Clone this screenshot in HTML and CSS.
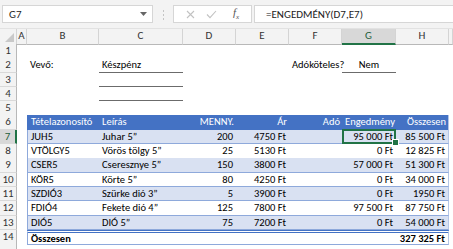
FILE: index.html
```html
<!DOCTYPE html>
<html lang="hu">
<head>
    <meta charset="UTF-8">
    <meta name="viewport" content="width=device-width, initial-scale=1.0">
    <title>Engedmény munkalap</title>
    <link rel="stylesheet" href="styles.css">
</head>
<body>
    <div class="formula-bar">
        <div class="name-box">
            <span>G7</span>
            <svg class="caret" width="7" height="4" viewBox="0 0 7 4"><path d="M0 0h7L3.5 4z" fill="#666"/></svg>
        </div>
        <div class="grip">
            <svg width="3" height="11" viewBox="0 0 3 11"><g fill="#c4c4c4"><rect x="1" y="1" width="1" height="2"/><rect x="1" y="5" width="1" height="2"/><rect x="1" y="9" width="1" height="2"/></g></svg>
        </div>
        <div class="fx-buttons">
            <svg class="cancel" width="9" height="9" viewBox="0 0 9 9"><path d="M1 1l7 7M8 1L1 8" stroke="#c2c2c2" stroke-width="1.1" fill="none"/></svg>
            <svg class="enter" width="11" height="9" viewBox="0 0 11 9"><path d="M1 4.5l3 3.2L10 1" stroke="#c2c2c2" stroke-width="1.1" fill="none"/></svg>
            <span class="fx">f<sub>x</sub></span>
        </div>
        <div class="formula">=ENGEDMÉNY(D7,E7)</div>
    </div>

    <div class="sheet">
        <div class="row heads">
            <div class="corner"><svg width="9" height="9" viewBox="0 0 9 9"><path d="M9 0v9H0z" fill="#c9c9c9"/></svg></div>
            <div class="ch">A</div><div class="ch">B</div><div class="ch">C</div><div class="ch">D</div>
            <div class="ch">E</div><div class="ch">F</div><div class="ch sel">G</div><div class="ch">H</div><div class="ch"></div>
        </div>

        <div class="row"><div class="rh">1</div><div class="c"></div><div class="c"></div><div class="c"></div><div class="c"></div><div class="c"></div><div class="c"></div><div class="c"></div><div class="c"></div><div class="c"></div></div>
        <div class="row"><div class="rh">2</div><div class="c"></div><div class="c">Vevő:</div><div class="c line">Készpénz</div><div class="c"></div><div class="c"></div><div class="c r">Adóköteles?</div><div class="c line mid">Nem</div><div class="c"></div><div class="c"></div></div>
        <div class="row"><div class="rh">3</div><div class="c"></div><div class="c"></div><div class="c line"></div><div class="c"></div><div class="c"></div><div class="c"></div><div class="c"></div><div class="c"></div><div class="c"></div></div>
        <div class="row"><div class="rh">4</div><div class="c"></div><div class="c"></div><div class="c line"></div><div class="c"></div><div class="c"></div><div class="c"></div><div class="c"></div><div class="c"></div><div class="c"></div></div>
        <div class="row"><div class="rh">5</div><div class="c"></div><div class="c"></div><div class="c"></div><div class="c"></div><div class="c"></div><div class="c"></div><div class="c"></div><div class="c"></div><div class="c"></div></div>

        <div class="row head-row"><div class="rh">6</div><div class="c"></div>
            <div class="c t first">Tételazonosító</div><div class="c t">Leírás</div><div class="c t r">MENNY.</div><div class="c t r">Ár</div>
            <div class="c t r">Adó</div><div class="c t r">Engedmény</div><div class="c t r last">Összesen</div><div class="c"></div>
        </div>
        <div class="row band"><div class="rh sel">7</div><div class="c"></div>
            <div class="c t first">JUH5</div><div class="c t">Juhar 5”</div><div class="c t r">200</div><div class="c t r">4750 Ft</div>
            <div class="c t"></div><div class="c t r active">95 000 Ft</div><div class="c t r last">85 500 Ft</div><div class="c"></div>
        </div>
        <div class="row"><div class="rh">8</div><div class="c"></div>
            <div class="c t first">VTÖLGY5</div><div class="c t">Vörös tölgy 5”</div><div class="c t r">25</div><div class="c t r">5130 Ft</div>
            <div class="c t"></div><div class="c t r">0 Ft</div><div class="c t r last">12 825 Ft</div><div class="c"></div>
        </div>
        <div class="row band"><div class="rh">9</div><div class="c"></div>
            <div class="c t first">CSER5</div><div class="c t">Cseresznye 5”</div><div class="c t r">150</div><div class="c t r">3800 Ft</div>
            <div class="c t"></div><div class="c t r">57 000 Ft</div><div class="c t r last">51 300 Ft</div><div class="c"></div>
        </div>
        <div class="row"><div class="rh">10</div><div class="c"></div>
            <div class="c t first">KÖR5</div><div class="c t">Körte 5”</div><div class="c t r">80</div><div class="c t r">4250 Ft</div>
            <div class="c t"></div><div class="c t r">0 Ft</div><div class="c t r last">34 000 Ft</div><div class="c"></div>
        </div>
        <div class="row band"><div class="rh">11</div><div class="c"></div>
            <div class="c t first">SZDIÓ3</div><div class="c t">Szürke dió 3”</div><div class="c t r">5</div><div class="c t r">3900 Ft</div>
            <div class="c t"></div><div class="c t r">0 Ft</div><div class="c t r last">1950 Ft</div><div class="c"></div>
        </div>
        <div class="row"><div class="rh">12</div><div class="c"></div>
            <div class="c t first">FDIÓ4</div><div class="c t">Fekete dió 4”</div><div class="c t r">125</div><div class="c t r">7800 Ft</div>
            <div class="c t"></div><div class="c t r">97 500 Ft</div><div class="c t r last">87 750 Ft</div><div class="c"></div>
        </div>
        <div class="row band"><div class="rh">13</div><div class="c"></div>
            <div class="c t first">DIÓ5</div><div class="c t">DIÓ 5”</div><div class="c t r">75</div><div class="c t r">7200 Ft</div>
            <div class="c t"></div><div class="c t r">0 Ft</div><div class="c t r last">54 000 Ft</div><div class="c"></div>
        </div>
        <div class="row total"><div class="rh">14</div><div class="c"></div>
            <div class="c t first">Összesen</div><div class="c t"></div><div class="c t"></div><div class="c t"></div>
            <div class="c t"></div><div class="c t"></div><div class="c t r last">327 325 Ft</div><div class="c"></div>
        </div>
        <div class="row"><div class="rh"></div><div class="c"></div><div class="c"></div><div class="c"></div><div class="c"></div><div class="c"></div><div class="c"></div><div class="c"></div><div class="c"></div><div class="c"></div></div>
    </div>
</body>
</html>
```

FILE: styles.css
```css
html, body {
    margin: 0;
    padding: 0;
    overflow: hidden;
}

body {
    width: 453px;
    height: 249px;
    background: #fff;
    font-family: Carlito, Lato, "Liberation Sans", sans-serif;
    font-size: 11px;
    color: #000;
}

/* formula bar */
.formula-bar {
    display: flex;
    align-items: center;
    height: 29px;
    padding-left: 2px;
    background: #f3f3f3;
    box-sizing: border-box;
    border-bottom: 1px solid #e2e2e2;
}

.name-box {
    display: flex;
    align-items: center;
    justify-content: space-between;
    width: 151px;
    height: 18px;
    padding: 0 5px 0 6px;
    box-sizing: border-box;
    background: #fff;
    border: 1px solid #d6d6d6;
    color: #222;
}

.grip {
    display: flex;
    justify-content: center;
    width: 20px;
}

.fx-buttons {
    display: flex;
    align-items: center;
    width: 79px;
    height: 18px;
    box-sizing: border-box;
    background: #fff;
    border: 1px solid #d6d6d6;
}

.cancel {
    margin-left: 12px;
}

.enter {
    margin-left: 11px;
}

.fx {
    margin-left: 16px;
    font-family: "Liberation Serif", serif;
    font-style: italic;
    font-size: 11px;
    color: #555;
}

.fx sub {
    font-size: 7px;
}

.formula {
    flex: 1;
    height: 18px;
    margin-left: 2px;
    padding-left: 11px;
    line-height: 17px;
    box-sizing: border-box;
    background: #fff;
    border: 1px solid #d6d6d6;
    border-right: none;
    color: #222;
}

/* grid */
.sheet {
    display: flex;
    flex-direction: column;
}

.row {
    display: grid;
    grid-template-columns: 17px 10px 72px 84px 53px 53px 53px 54px 53px 1fr;
    height: 14.3px;
    line-height: 13.5px;
}

.row.heads {
    height: 15px;
    line-height: 14px;
}

.corner, .ch {
    background: #f3f3f3;
    border-right: 1px solid #d4d4d4;
    border-bottom: 1px solid #b8b8b8;
    box-sizing: border-box;
    text-align: center;
    color: #333;
}

.corner {
    display: flex;
    align-items: flex-end;
    justify-content: flex-end;
    padding: 0 2px 2px 0;
}

.ch.sel {
    background: #d8d8d8;
    border-bottom: 2px solid #217346;
    color: #1e5e3b;
}

.rh {
    background: #f3f3f3;
    border-right: 1px solid #b8b8b8;
    border-bottom: 1px solid #d9d9d9;
    box-sizing: border-box;
    text-align: center;
    color: #333;
}

.rh.sel {
    background: #d8d8d8;
    border-right: 2px solid #217346;
    color: #1e5e3b;
}

.c {
    padding: 0 3px;
    font-size: 10.5px;
    white-space: nowrap;
    box-sizing: border-box;
    overflow: visible;
}

.r {
    text-align: right;
}

.mid {
    text-align: center;
}

.line {
    border-bottom: 1px solid #6b6b6b;
}

/* table */
.t {
    border-bottom: 1px solid #8ea9db;
}

.t.first {
    border-left: 1px solid #8ea9db;
}

.t.last {
    border-right: 1px solid #b4c6e7;
}

.band .t {
    background: #d9e1f2;
}

.head-row .t {
    background: #4472c4;
    color: #fff;
    border-bottom: none;
}

.head-row .t.r {
    padding-right: 2px;
}

.head-row .t.first {
    border-left-color: #4472c4;
}

.total .t {
    border-top: 3px double #4472c4;
    font-weight: bold;
    line-height: 11px;
}

.active {
    position: relative;
}

.active::before {
    content: "";
    position: absolute;
    left: 0;
    top: -1px;
    right: 0;
    bottom: -1px;
    border: 2px solid #217346;
}

.active::after {
    content: "";
    position: absolute;
    right: -3px;
    bottom: -3px;
    width: 5px;
    height: 5px;
    background: #217346;
    border: 1px solid #fff;
}
```
